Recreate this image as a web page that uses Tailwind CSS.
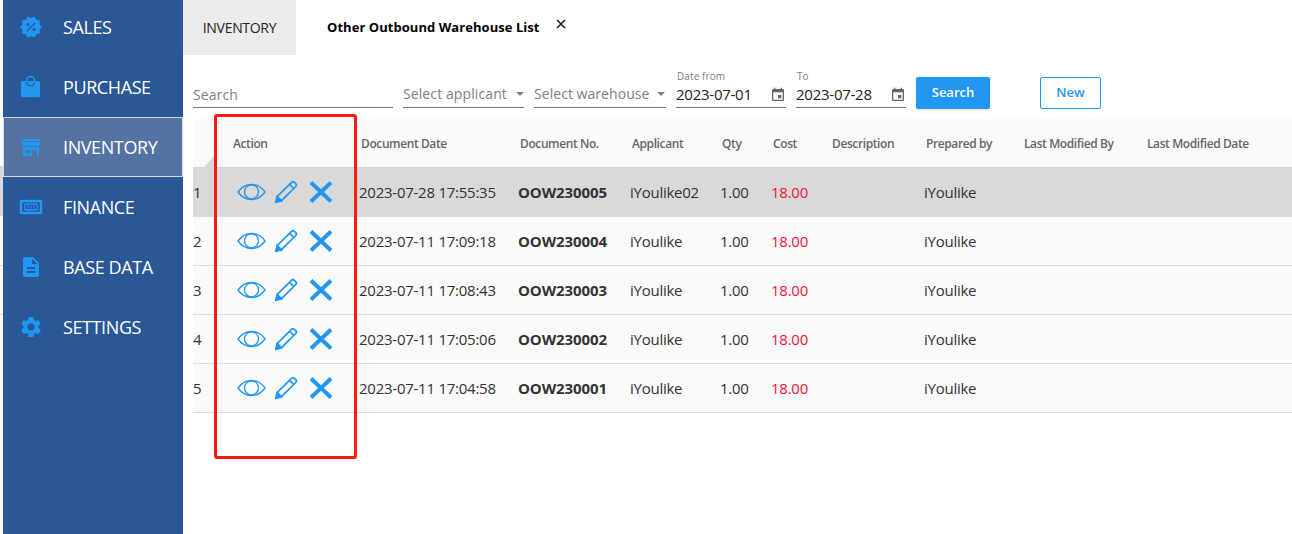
<!DOCTYPE html>
<html lang="en">
  <head>
    <meta charset="UTF-8" />
    <title>Other Outbound Warehouse List</title>
    <script src="https://cdn.jsdelivr.net/npm/@tailwindcss/browser@4"></script>
  </head>
  <body class="bg-white font-['Open_Sans',sans-serif]">
    <div class="relative flex h-[534px] w-[1292px] overflow-hidden pl-[3px]">
      <!-- table rows peeking out left of the sidebar -->
      <div class="absolute left-0 top-[166px] h-[50px] w-[3px] bg-[#dadada]"></div>
      <div class="absolute left-0 top-[265px] h-px w-[3px] bg-[#dcdcdc]"></div>
      <div class="absolute left-0 top-[314px] h-px w-[3px] bg-[#dcdcdc]"></div>

      <!-- Sidebar -->
      <nav class="w-[180px] shrink-0 bg-[#2a5795] text-[18px] tracking-[-0.4px] text-white">
        <a class="-mt-[3px] flex h-[60px] items-center gap-[20px] pl-[16px]">
          <svg class="size-[24px] text-[#2196f3]" viewBox="0 0 24 24" fill="currentColor"><path d="M23 12l-2.44-2.78.34-3.68-3.61-.82-1.89-3.18L12 3 8.6 1.54 6.71 4.72l-3.61.81.34 3.68L1 12l2.44 2.78-.34 3.69 3.61.82 1.89 3.18L12 21l3.4 1.46 1.89-3.18 3.61-.82-.34-3.68L23 12z"/><path d="M15.6 7.4l1 1-8.2 8.2-1-1z" fill="#2a5795"/><circle cx="9" cy="9.5" r="1.6" fill="#2a5795"/><circle cx="15" cy="14.5" r="1.6" fill="#2a5795"/></svg>
          SALES
        </a>
        <a class="flex h-[60px] items-center gap-[20px] pl-[16px]">
          <svg class="size-[24px] text-[#2196f3]" viewBox="0 0 24 24" fill="none"><rect x="2" y="6" width="19" height="16" rx="1.500" fill="currentColor"/><path d="M7.500 7V5.500a4 4 0 0 1 8 0V7" stroke="currentColor" stroke-width="1.500"/><path d="M7.500 7a4 4 0 0 0 8 0" stroke="#2a5795" stroke-width="1.200"/></svg>
          PURCHASE
        </a>
        <a class="flex h-[60px] items-center gap-[20px] border border-[#d5d9e0] bg-[#5573a2] pl-[15px]">
          <svg class="size-[24px] text-[#2196f3]" viewBox="0 0 24 24" fill="currentColor"><path d="M3 4h18v2H3zM3 7h18v4H3zM4 12h16v9h-2v-6h-5v6H4zm2 3v3h5v-3z"/></svg>
          INVENTORY
        </a>
        <a class="flex h-[60px] items-center gap-[20px] pl-[16px]">
          <svg class="size-[24px] text-[#2196f3]" viewBox="0 0 24 24" fill="none" stroke="currentColor"><rect x="2" y="6" width="20" height="12" stroke-width="2.400"/><rect x="5.500" y="9" width="13" height="6" rx="2" stroke-width="1.300"/><path d="M9 10.500v3M12 10.500v3M15 10.500v3" stroke-width="1.200"/></svg>
          FINANCE
        </a>
        <a class="flex h-[60px] items-center gap-[20px] pl-[16px]">
          <svg class="size-[24px] text-[#2196f3]" viewBox="0 0 24 24" fill="currentColor"><path d="M14 2H6c-1.100 0-2 .9-2 2v16c0 1.100.9 2 2 2h12c1.100 0 2-.9 2-2V8l-6-6zm2 16H8v-2h8v2zm0-4H8v-2h8v2zm-3-5V3.500L18.500 9H13z"/></svg>
          BASE DATA
        </a>
        <a class="flex h-[60px] items-center gap-[20px] pl-[16px]">
          <svg class="size-[24px] text-[#2196f3]" viewBox="0 0 24 24" fill="currentColor"><path d="M19.400 13c.04-.32.1-.66.1-1s-.06-.68-.1-1l2.100-1.650a.5.5 0 0 0 .12-.64l-2-3.460a.5.5 0 0 0-.61-.22l-2.490 1a7.300 7.300 0 0 0-1.690-.98l-.38-2.630A.49.49 0 0 0 14 2h-4a.49.49 0 0 0-.49.42l-.38 2.630c-.61.25-1.170.59-1.690.98l-2.490-1a.49.49 0 0 0-.61.22l-2 3.460a.49.49 0 0 0 .12.64L4.570 11c-.04.32-.07.66-.07 1s.03.68.07 1l-2.110 1.650a.5.5 0 0 0-.12.64l2 3.460c.12.22.39.3.61.22l2.490-1c.52.4 1.080.73 1.690.98l.38 2.630c.03.24.24.42.49.42h4c.25 0 .46-.18.49-.42l.38-2.630c.61-.25 1.170-.59 1.690-.98l2.490 1c.22.08.49 0 .61-.22l2-3.460a.5.500 0 0 0-.12-.64L19.400 13zM12 15.500a3.500 3.500 0 1 1 0-7 3.500 3.500 0 0 1 0 7z"/></svg>
          SETTINGS
        </a>
      </nav>

      <main class="min-w-0 flex-1">
        <!-- Tabs -->
        <div class="flex h-[55px] items-start">
          <div class="flex h-[55px] w-[113px] items-center justify-center bg-[#ececec] text-[14px] tracking-[-0.3px] text-[#222]">INVENTORY</div>
          <div class="flex h-[55px] items-center pl-[31px] text-[13px] font-bold tracking-[0.05px] text-black">Other Outbound Warehouse List</div>
          <svg class="ml-[16px] mt-[19px] size-[10px] text-[#222]" viewBox="0 0 10 10" stroke="currentColor" stroke-width="1.600"><path d="M1 1l8 8M9 1L1 9"/></svg>
        </div>

        <!-- Filters -->
        <div class="flex h-[64px] items-end pb-[11px] pl-[10px] text-[14px]">
          <div class="flex h-[30px] w-[200px] items-center border-b border-[#777] pt-[3px] tracking-[0.1px] text-[#808080]">Search</div>
          <div class="ml-[10px] flex h-[32px] w-[121px] items-center justify-between border-b border-[#777] pt-[4px] tracking-[0.1px] text-[#808080]">
            Select applicant
            <span class="h-0 w-0 border-x-[4px] border-t-[4px] border-x-transparent border-t-[#808080]"></span>
          </div>
          <div class="ml-[10px] flex h-[32px] w-[132px] items-center justify-between border-b border-[#777] pr-[1px] pt-[4px] tracking-[0.05px] text-[#808080]">
            Select warehouse
            <span class="h-0 w-0 border-x-[4px] border-t-[4px] border-x-transparent border-t-[#808080]"></span>
          </div>
          <div class="ml-[10px] w-[110px] border-b border-[#777]">
            <div class="pl-[1px] pt-[1px] text-[10px] leading-[12px] tracking-[0.1px] text-[#808080]">Date from</div>
            <div class="flex h-[25px] items-center justify-between text-[15px] tracking-[-0.25px] text-[#222]">
              2023-07-01
              <svg class="size-[16px] text-[#666]" viewBox="0 0 24 24" fill="currentColor"><path d="M17 12h-5v5h5v-5zM16 1v2H8V1H6v2H5a2 2 0 0 0-2 2v14a2 2 0 0 0 2 2h14a2 2 0 0 0 2-2V5a2 2 0 0 0-2-2h-1V1h-2zm3 18H5V8h14v11z"/></svg>
            </div>
          </div>
          <div class="ml-[10px] w-[110px] border-b border-[#777]">
            <div class="pl-[1px] pt-[1px] text-[10px] leading-[12px] text-[#808080]">To</div>
            <div class="flex h-[25px] items-center justify-between text-[15px] tracking-[-0.25px] text-[#222]">
              2023-07-28
              <svg class="size-[16px] text-[#666]" viewBox="0 0 24 24" fill="currentColor"><path d="M17 12h-5v5h5v-5zM16 1v2H8V1H6v2H5a2 2 0 0 0-2 2v14a2 2 0 0 0 2 2h14a2 2 0 0 0 2-2V5a2 2 0 0 0-2-2h-1V1h-2zm3 18H5V8h14v11z"/></svg>
            </div>
          </div>
          <button class="-mb-[1px] ml-[10px] h-[32px] w-[74px] rounded-[2px] bg-[#2196f3] text-[13px] font-semibold text-white shadow-sm">Search</button>
          <button class="-mb-[1px] ml-[50px] h-[32px] w-[61px] rounded-[2px] border border-[#2196f3] bg-white text-[13px] font-semibold text-[#2196f3]">New</button>
        </div>

        <!-- Table -->
        <div class="pl-[10px]">
          <table class="w-[1099px] table-fixed border-collapse text-[15px] tracking-[-0.25px] text-[#333]">
            <colgroup>
              <col class="w-[40px]" /><col class="w-[126px]" /><col class="w-[159px]" /><col class="w-[112px]" /><col class="w-[90px]" /><col class="w-[51px]" /><col class="w-[59px]" /><col class="w-[94px]" /><col class="w-[98px]" /><col class="w-[123px]" /><col />
            </colgroup>
            <thead class="bg-[#fafafa] text-left text-[12px] font-semibold tracking-[-0.4px] text-[#666]">
              <tr class="h-[48px]">
                <th class="relative p-0 font-semibold">
                  <span class="absolute bottom-0 left-[11px] h-0 w-0 border-b-[11px] border-l-[10px] border-b-[#d9d9d9] border-l-transparent"></span>
                </th>
                <th class="p-0 pt-[2px] font-semibold">Action</th>
                <th class="p-0 pl-[2px] pt-[2px] font-semibold">Document Date</th>
                <th class="p-0 pl-[2px] pt-[2px] font-semibold">Document No.</th>
                <th class="p-0 pl-[2px] pt-[2px] font-semibold">Applicant</th>
                <th class="p-0 pl-[2px] pt-[2px] font-semibold">Qty</th>
                <th class="p-0 pl-[2px] pt-[2px] font-semibold">Cost</th>
                <th class="p-0 pl-[2px] pt-[2px] font-semibold">Description</th>
                <th class="p-0 pl-[2px] pt-[2px] font-semibold">Prepared by</th>
                <th class="p-0 pl-[2px] pt-[2px] font-semibold">Last Modified By</th>
                <th class="p-0 pl-[2px] pt-[2px] font-semibold">Last Modified Date</th>
              </tr>
            </thead>
            <tbody id="rows"></tbody>
          </table>
        </div>
      </main>

      <!-- Hand-drawn highlight over the Action column -->
      <div class="pointer-events-none absolute left-[214px] top-[114px] h-[345px] w-[143px] rounded-[3px] border-[3px] border-[#ff1a0f]"></div>
    </div>

    <script>
      const records = [
        ['2023-07-28 17:55:35', 'OOW230005', 'iYoulike02'],
        ['2023-07-11 17:09:18', 'OOW230004', 'iYoulike'],
        ['2023-07-11 17:08:43', 'OOW230003', 'iYoulike'],
        ['2023-07-11 17:05:06', 'OOW230002', 'iYoulike'],
        ['2023-07-11 17:04:58', 'OOW230001', 'iYoulike']
      ];

      const actions = `
        <div class="flex items-center pt-[1px] text-[#2196f3]">
          <svg class="ml-[4px] h-[20px] w-[29px]" viewBox="0 0 29 20" fill="none" stroke="currentColor" stroke-width="1.300"><path d="M1 10C5 4.500 9.500 2.500 14.500 2.500S24 4.500 28 10c-4 5.500-8.500 7.500-13.500 7.500S5 15.500 1 10z"/><circle cx="14.500" cy="9.800" r="7"/></svg>
          <svg class="ml-[8px] size-[24px]" viewBox="0 0 24 24" fill="none" stroke="currentColor" stroke-width="1.700"><path d="M2 22l1.300-5.500L17.500 2.300a2 2 0 0 1 2.800 0l1.400 1.400a2 2 0 0 1 0 2.800L7.500 20.700z"/><path d="M15.500 4.300l4.200 4.200"/><path d="M2 22l1.300-5.500 4.200 4.200z" fill="currentColor"/></svg>
          <svg class="ml-[11px] size-[24px]" viewBox="0 0 24 24" stroke="currentColor" stroke-width="3.900"><path d="M2 2.500l20 19M22 2.500l-20 19"/></svg>
        </div>`;

      document.getElementById('rows').innerHTML = records.map((r, i) => `
        <tr class="h-[49px] border-b border-[#dcdcdc] ${i === 0 ? 'bg-[#d9d9d9]' : 'bg-[#fafafa]'}">
          <td class="p-0 pt-[2px]">${i + 1}</td>
          <td class="p-0">${actions}</td>
          <td class="p-0 pt-[1px]">${r[0]}</td>
          <td class="p-0 pt-[1px] font-bold tracking-[-0.1px]">${r[1]}</td>
          <td class="p-0 pt-[1px]">${r[2]}</td>
          <td class="p-0 pt-[1px]">1.00</td>
          <td class="p-0 pt-[1px] text-[#f5123d]">18.00</td>
          <td class="p-0"></td>
          <td class="p-0 pt-[1px]">iYoulike</td>
          <td class="p-0"></td>
          <td class="p-0"></td>
        </tr>`).join('');
    </script>
  </body>
</html>
